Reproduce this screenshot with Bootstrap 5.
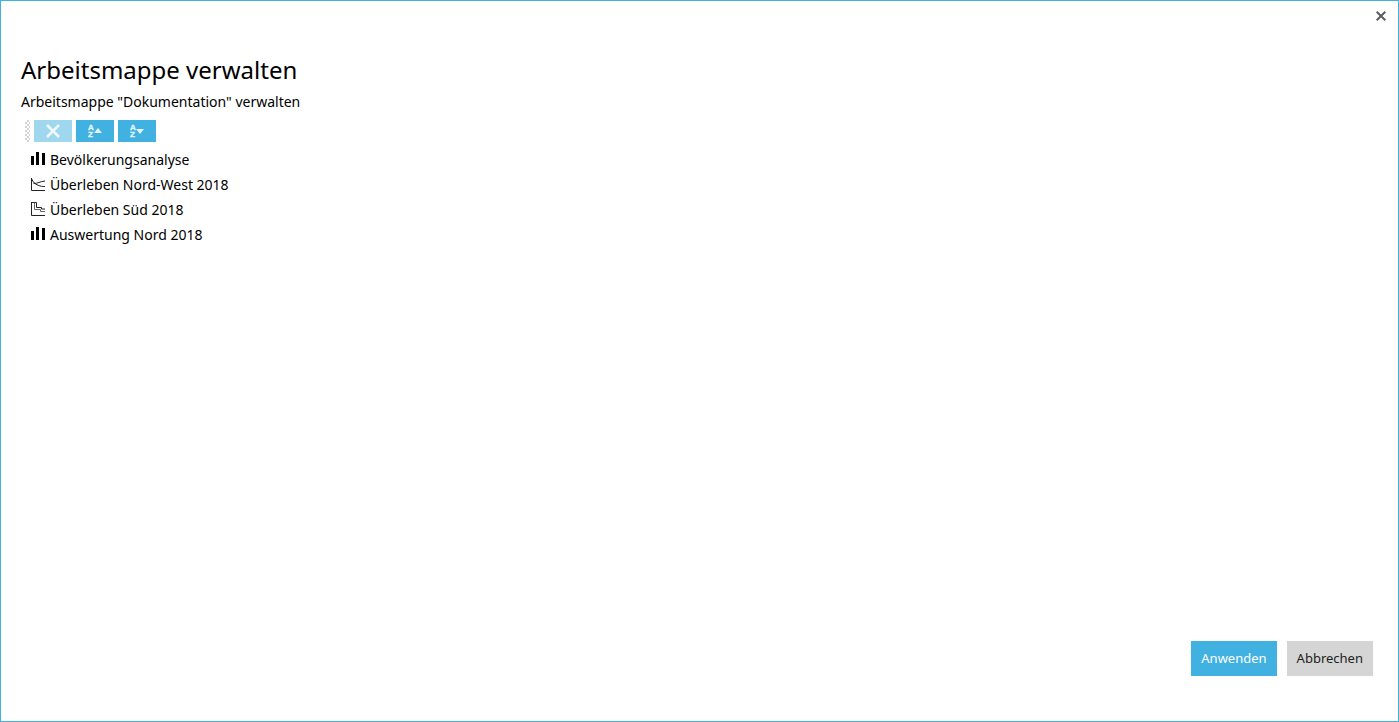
<!DOCTYPE html>
<html lang="de">
<head>
<meta charset="utf-8">
<meta name="viewport" content="width=device-width, initial-scale=1">
<title>Arbeitsmappe verwalten</title>
<link href="https://cdn.jsdelivr.net/npm/bootstrap@5.3.0/dist/css/bootstrap.min.css" rel="stylesheet">
<style>
  body { font-family: "Noto Sans", "Open Sans", sans-serif; font-size: 14px; line-height: 20px; color: #000; }
  .dialog { border: 1px solid #41b1e1; }
  .dialog-close { width: 35px; height: 30px; color: #5c5c5c; }
  .dialog-body { padding: 21px 20px 0; }
  .dialog-title { font-size: 24px; line-height: 36px; }
  .dialog-foot { gap: 10px; padding: 0 25px 45px; }
  .dialog .btn { --bs-btn-border-radius: 0; --bs-btn-border-width: 0; }
  .btn-accent { --bs-btn-color: #fff; --bs-btn-bg: #41b1e1; --bs-btn-hover-color: #fff; --bs-btn-hover-bg: #2e9fd0; --bs-btn-disabled-color: #fff; --bs-btn-disabled-bg: #41b1e1; --bs-btn-disabled-opacity: .5; }
  .btn-neutral { --bs-btn-color: #222; --bs-btn-bg: #d5d5d5; --bs-btn-hover-bg: #c4c4c4; }
  .btn-tool { width: 38px; height: 22px; }
  .btn-tool svg { opacity: .85; }
  .btn-action { font-size: 13px; height: 35px; padding: 0 10px; }
  .grip { width: 5px; height: 22px; background: repeating-conic-gradient(#d2d2d2 0 25%, #fff 0 50%) 0 0 / 4px 4px; }
  .sheets { padding-top: 5px; }
  .sheet { height: 25px; gap: 4px; padding-left: 9px; }
  .glyph-text { font: bold 8px "Liberation Sans", sans-serif; stroke: currentColor; stroke-width: .4px; }
</style>
</head>
<body>
<main class="dialog d-flex flex-column min-vh-100">
  <div class="d-flex justify-content-end">
    <button type="button" class="btn dialog-close p-0 d-flex align-items-center justify-content-center" aria-label="Schließen">
      <svg width="10" height="10" viewBox="0 0 10 10" fill="none" stroke="currentColor" stroke-width="2"><path d="M.7.7l8.6 8.6M9.3.7L.7 9.3"/></svg>
    </button>
  </div>
  <div class="dialog-body flex-grow-1">
    <header class="mb-2">
      <h1 class="dialog-title fw-normal m-0 mb-1">Arbeitsmappe verwalten</h1>
      <p class="m-0">Arbeitsmappe "Dokumentation" verwalten</p>
    </header>
    <div class="d-flex gap-1 ps-1" role="toolbar" aria-label="Blätter ordnen">
      <span class="grip"></span>
      <button type="button" class="btn btn-accent btn-tool p-0 d-flex align-items-center justify-content-center" disabled aria-label="Löschen">
        <svg width="14" height="14" viewBox="0 0 14 14" fill="none" stroke="currentColor" stroke-width="2.5"><path d="M1 1l12 12M13 1L1 13"/></svg>
      </button>
      <button type="button" class="btn btn-accent btn-tool p-0 d-flex align-items-center justify-content-center" aria-label="Aufsteigend sortieren">
        <svg width="14" height="16" viewBox="0 0 14 16" fill="currentColor"><text class="glyph-text" x="0" y="7">A</text><text class="glyph-text" x="0" y="14">Z</text><path d="M6 10L10 5 14 10z"/></svg>
      </button>
      <button type="button" class="btn btn-accent btn-tool p-0 d-flex align-items-center justify-content-center" aria-label="Absteigend sortieren">
        <svg width="14" height="16" viewBox="0 0 14 16" fill="currentColor"><text class="glyph-text" x="0" y="7">A</text><text class="glyph-text" x="0" y="14">Z</text><path d="M6 6L10 11 14 6z"/></svg>
      </button>
    </div>
    <ul class="sheets list-unstyled m-0">
      <li class="sheet d-flex align-items-center">
        <svg width="16" height="16" viewBox="0 0 16 16"><path d="M1 4h3v9H1zM6 0h3v13H6zM12 1h3v12h-3z"/></svg>
        <span>Bevölkerungsanalyse</span>
      </li>
      <li class="sheet d-flex align-items-center">
        <svg width="16" height="16" viewBox="0 0 16 16" fill="none" stroke="#222"><path d="M1.500 1v12.500H15M1.500 1.500C3 5.500 5 7 8 8.200S12 9.500 15 9.500M3.500 6.500C8 6.500 10 4.500 15 4"/></svg>
        <span>Überleben Nord-West 2018</span>
      </li>
      <li class="sheet d-flex align-items-center">
        <svg width="16" height="16" viewBox="0 0 16 16" fill="none" stroke="#222"><path d="M1.500 0v13.500H15M1.500 .5h5v5h5v1.500H15"/><path d="M4.500 .5v7h6v2H15" stroke="#666"/></svg>
        <span>Überleben Süd 2018</span>
      </li>
      <li class="sheet d-flex align-items-center">
        <svg width="16" height="16" viewBox="0 0 16 16"><path d="M1 4h3v9H1zM6 0h3v13H6zM12 1h3v12h-3z"/></svg>
        <span>Auswertung Nord 2018</span>
      </li>
    </ul>
  </div>
  <footer class="dialog-foot d-flex justify-content-end">
    <button type="button" class="btn btn-accent btn-action">Anwenden</button>
    <button type="button" class="btn btn-neutral btn-action">Abbrechen</button>
  </footer>
</main>
<script src="https://cdn.jsdelivr.net/npm/bootstrap@5.3.0/dist/js/bootstrap.bundle.min.js"></script>
</body>
</html>
